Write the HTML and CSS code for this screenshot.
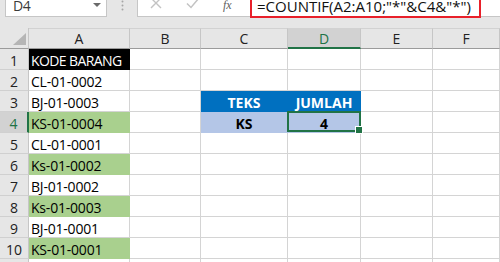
FILE: index.html
```html
<!DOCTYPE html>
<html>
<head>
<meta charset="utf-8">
<link rel="stylesheet" href="styles.css">
</head>
<body>
<div class="fbar">
  <div class="namebox">
    <span class="ref">D4</span>
    <svg class="dd" width="8" height="4" viewBox="0 0 8 4"><polygon points="0,0 8,0 4,4" fill="#6a6a6a"/></svg>
  </div>
  <div class="grip">
    <svg width="3" height="13" viewBox="0 0 3 13"><circle cx="1.5" cy="1.5" r="1" fill="#a6a6a6"/><circle cx="1.5" cy="5.5" r="1" fill="#a6a6a6"/><circle cx="1.5" cy="9.5" r="1" fill="#a6a6a6"/></svg>
  </div>
  <div class="finput">
    <div class="ficons">
      <svg class="ico" width="12" height="12" viewBox="0 0 12 12"><path d="M1 1 L11 11 M11 1 L1 11" stroke="#c3c3c3" stroke-width="1.4" fill="none"/></svg>
      <svg class="ico chk" width="14" height="12" viewBox="0 0 14 12"><path d="M1 6.5 L5 10.5 L13 1" stroke="#c3c3c3" stroke-width="1.5" fill="none"/></svg>
      <span class="fx">fx</span>
    </div>
    <div class="formula">=COUNTIF(A2:A10;"*"&amp;C4&amp;"*")</div>
  </div>
</div>
<div class="sheet">
  <div class="hd corner"><svg width="13" height="12" viewBox="0 0 13 12"><polygon points="13,0 13,12 0,12" fill="#b5b5b5"/></svg></div>
  <div class="hd">A</div>
  <div class="hd">B</div>
  <div class="hd">C</div>
  <div class="hd hsel">D</div>
  <div class="hd">E</div>
  <div class="hd">F</div>

  <div class="rh">1</div>
  <div class="c f-black tight">KODE BARANG</div>
  <div class="c"></div><div class="c"></div><div class="c"></div><div class="c"></div><div class="c"></div>

  <div class="rh">2</div>
  <div class="c">CL-01-0002</div>
  <div class="c"></div><div class="c"></div><div class="c"></div><div class="c"></div><div class="c"></div>

  <div class="rh">3</div>
  <div class="c">BJ-01-0003</div>
  <div class="c"></div>
  <div class="c f-blue ctr">TEKS</div>
  <div class="c f-blue ctr">JUMLAH</div>
  <div class="c"></div><div class="c"></div>

  <div class="rh rsel">4</div>
  <div class="c f-green">KS-01-0004</div>
  <div class="c"></div>
  <div class="c f-lblue ctr">KS</div>
  <div class="c f-lblue ctr sel">4</div>
  <div class="c"></div><div class="c"></div>

  <div class="rh">5</div>
  <div class="c">CL-01-0001</div>
  <div class="c"></div><div class="c"></div><div class="c"></div><div class="c"></div><div class="c"></div>

  <div class="rh">6</div>
  <div class="c f-green">Ks-01-0002</div>
  <div class="c"></div><div class="c"></div><div class="c"></div><div class="c"></div><div class="c"></div>

  <div class="rh">7</div>
  <div class="c">BJ-01-0002</div>
  <div class="c"></div><div class="c"></div><div class="c"></div><div class="c"></div><div class="c"></div>

  <div class="rh">8</div>
  <div class="c f-green">Ks-01-0003</div>
  <div class="c"></div><div class="c"></div><div class="c"></div><div class="c"></div><div class="c"></div>

  <div class="rh">9</div>
  <div class="c">BJ-01-0001</div>
  <div class="c"></div><div class="c"></div><div class="c"></div><div class="c"></div><div class="c"></div>

  <div class="rh">10</div>
  <div class="c f-green">KS-01-0001</div>
  <div class="c"></div><div class="c"></div><div class="c"></div><div class="c"></div><div class="c"></div>

  <div class="rh">11</div>
  <div class="c"></div>
  <div class="c"></div><div class="c"></div><div class="c"></div><div class="c"></div><div class="c"></div>
</div>
</body>
</html>
```
FILE: styles.css
```css
* { box-sizing: border-box; }
html, body { margin: 0; padding: 0; }
body {
  width: 500px;
  height: 262px;
  overflow: hidden;
  background: #fff;
  font-family: "Open Sans", "Noto Sans", sans-serif;
  font-size: 14px;
  color: #000;
}

/* formula bar */
.fbar {
  display: flex;
  align-items: flex-start;
  height: 28px;
  background: #e6e6e6;
}
.namebox {
  margin-left: 5px;
  width: 102px;
  height: 17px;
  background: #fff;
  border: 1px solid #c6c6c6;
  border-top: none;
  display: flex;
  align-items: flex-end;
  justify-content: space-between;
  padding: 0 5px 3px 7px;
}
.ref { line-height: 15px; color: #3a3a3a; letter-spacing: -0.5px; }
.dd { align-self: flex-start; margin-top: 3px; display: block; }
.grip {
  width: 30px;
  height: 17px;
  display: flex;
  justify-content: center;
}
.grip svg { display: block; margin-left: 1px; }
.finput {
  flex: 1;
  height: 17px;
  background: #fff;
  border-left: 1px solid #c6c6c6;
  border-bottom: 1px solid #c6c6c6;
  display: flex;
  align-items: flex-start;
}
.ficons {
  width: 112px;
  height: 16px;
  display: flex;
  align-items: flex-start;
  padding-left: 12px;
  gap: 24px;
}
.ico { display: block; margin-top: -3px; }
.fx {
  font-family: "Liberation Serif", serif;
  font-style: italic;
  font-size: 12px;
  line-height: 12px;
  color: #606060;
  margin-top: -1px;
  margin-left: -1px;
}
.formula {
  width: 231px;
  height: 18px;
  border: 2px solid #e8202a;
  border-top: none;
  display: flex;
  align-items: flex-end;
  padding: 0 0 2px 5px;
  font-size: 15px;
  line-height: 16px;
  letter-spacing: 0;
  color: #111;
  white-space: nowrap;
}

/* sheet grid */
.sheet {
  display: grid;
  grid-template-columns: 29px 101px 71px 87px 73px 72px 1fr;
  grid-auto-rows: 21px;
}
.hd {
  background: #e6e6e6;
  border-top: 1px solid #d2d2d2;
  border-right: 1px solid #c6c6c6;
  border-bottom: 1px solid #9b9b9b;
  display: flex;
  align-items: center;
  justify-content: center;
  line-height: 15px;
  color: #222;
}
.corner {
  border-top: none;
  justify-content: flex-end;
  align-items: flex-end;
  padding: 0 2px 3px 0;
}
.corner svg { display: block; }
.hsel {
  background: #d2d2d2;
  color: #217346;
  border-bottom: 2px solid #217346;
}
.rh {
  background: #e6e6e6;
  border-right: 1px solid #c6c6c6;
  border-bottom: 1px solid #d0d0d0;
  display: flex;
  align-items: flex-end;
  justify-content: center;
  padding-bottom: 1px;
  line-height: 15px;
  color: #222;
}
.rsel {
  background: #d2d2d2;
  color: #217346;
  border-right: 2px solid #217346;
}
.c {
  border-right: 1px solid #d4d4d4;
  border-bottom: 1px solid #d4d4d4;
  display: flex;
  align-items: flex-end;
  padding: 0 0 1px 2px;
  line-height: 15px;
  letter-spacing: -0.2px;
  white-space: nowrap;
  overflow: hidden;
}
.tight { letter-spacing: -0.6px; }
.ctr { justify-content: center; padding-left: 0; font-weight: 700; letter-spacing: 0; }
.f-black { background: #000; color: #fff; border-color: #000; }
.f-green { background: #a9d08e; border-color: #a9d08e; }
.f-blue { background: #0070c0; color: #fff; border-color: #0070c0; }
.f-lblue { background: #b4c6e7; border-color: #b4c6e7; }
.sel { position: relative; z-index: 1; overflow: visible; }
.sel::before {
  content: "";
  position: absolute;
  left: -1px;
  top: -1px;
  right: -1px;
  bottom: 0;
  border: 2px solid #217346;
}
.sel::after {
  content: "";
  position: absolute;
  right: -3px;
  bottom: -2px;
  width: 6px;
  height: 6px;
  background: #217346;
  border: 1px solid #fff;
}
```
